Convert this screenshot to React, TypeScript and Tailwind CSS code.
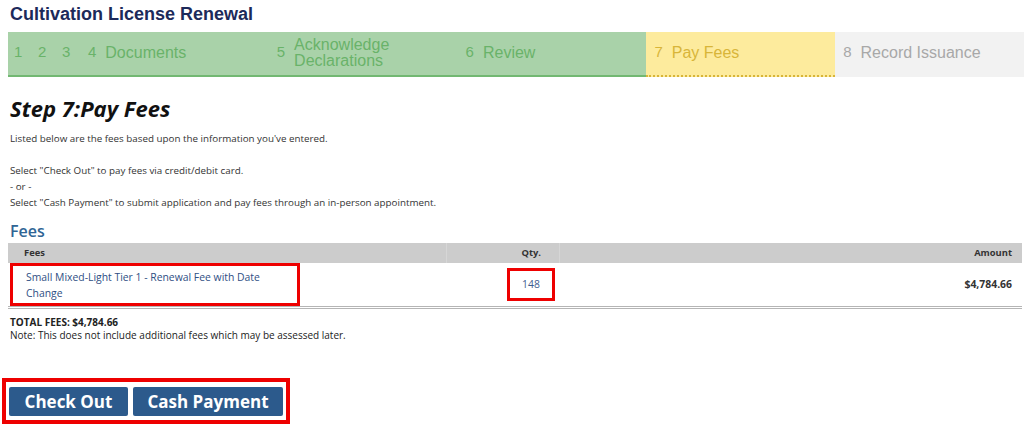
import React from 'react';

type Step = { num: string; label?: string[]; state: 'done' | 'current' | 'todo'; wide: boolean };

const STEPS: Step[] = [
  { num: '1', state: 'done', wide: false },
  { num: '2', state: 'done', wide: false },
  { num: '3', state: 'done', wide: false },
  { num: '4', label: ['Documents'], state: 'done', wide: true },
  { num: '5', label: ['Acknowledge', 'Declarations'], state: 'done', wide: true },
  { num: '6', label: ['Review'], state: 'done', wide: true },
  { num: '7', label: ['Pay Fees'], state: 'current', wide: true },
  { num: '8', label: ['Record Issuance'], state: 'todo', wide: true },
];

const STATE_CLASSES: Record<Step['state'], string> = {
  done: 'bg-[#a9d2a9] text-[#69b369] border-b-2 border-[#72b872]',
  current: 'bg-[#fdeb9d] text-[#d8b539] border-b-2 border-dotted border-[#d8b539]',
  todo: 'bg-[#f2f2f2] text-[#a8a8a8] border-b-2 border-[#f2f2f2]',
};

const StepBar: React.FC = () => (
  <div className="ml-[8px] mt-[7px] flex h-[45px]">
    {STEPS.map((s) => (
      <div
        key={s.num}
        className={`flex items-center h-full pb-[2px] ${s.wide ? 'w-[189px] pl-[8px]' : 'w-[24px] pl-[6px]'} ${STATE_CLASSES[s.state]}`}
      >
        <span className="text-[15px]">{s.num}</span>
        {s.label && (
          <span className="ml-[9px] text-[16px] leading-[16px]">
            {s.label.map((l) => (
              <span key={l} className="block">
                {l}
              </span>
            ))}
          </span>
        )}
      </div>
    ))}
  </div>
);

export default function App() {
  return (
    <div className="w-[1024px] h-[433px] bg-white overflow-hidden font-['Open_Sans',sans-serif]">
      <h1 className="pl-[10px] pt-[3px] text-[18px] leading-[22px] font-bold text-[#1c2a5a] font-['Liberation_Sans',Arial,sans-serif]">
        Cultivation License Renewal
      </h1>

      <div className="font-['Liberation_Sans',Arial,sans-serif]">
        <StepBar />
      </div>

      <div className="px-[10px]">
        <h2 className="mt-[17px] text-[22px] leading-[28px] font-bold italic text-[#111]">Step 7:Pay Fees</h2>

        <div className="mt-[9px] text-[9.8px] leading-[16px] text-[#333]">
          <p>Listed below are the fees based upon the information you've entered.</p>
          <p className="mt-[16px]">Select "Check Out" to pay fees via credit/debit card.</p>
          <p>- or -</p>
          <p>Select "Cash Payment" to submit application and pay fees through an in-person appointment.</p>
        </div>

        <h3 className="mt-[10px] text-[16px] leading-[20px] font-semibold text-[#2f6595]">Fees</h3>
      </div>

      <div className="ml-[8px] mr-[2px] mt-[2px]">
        <div className="flex h-[20px] items-center bg-[#cccccc] text-[9.4px] font-bold text-[#333]">
          <div className="w-[438px] pl-[16px]">Fees</div>
          <div className="w-[113px] h-full flex items-center justify-end pr-[18px] border-l border-[#d6d6d6]">Qty.</div>
          <div className="flex-1 h-full flex items-center justify-end pr-[10px] border-l border-[#d6d6d6]">Amount</div>
        </div>
        <div className="flex h-[46px] items-center border-b-[3px] border-double border-[#b5b5b5] text-[10.4px]">
          <div className="w-[438px] h-full">
            <div className="ml-[2px] w-[290px] h-full border-[3px] border-[#ee0000] pl-[13px] pr-[8px] pt-[3px] leading-[16px] text-[#2f4f84]">
              Small Mixed-Light Tier 1 - Renewal Fee with Date Change
            </div>
          </div>
          <div className="w-[113px] h-full flex items-center justify-end pr-[4px]">
            <div className="w-[48px] h-[33px] border-[3px] border-[#ee0000] flex items-center justify-center text-[#3d5d8f]">
              148
            </div>
          </div>
          <div className="flex-1 flex justify-end pr-[10px] font-bold text-[#333]">$4,784.66</div>
        </div>
      </div>

      <div className="px-[10px] mt-[7px] text-[10px] leading-[13px] text-[#222]">
        <p className="font-bold">TOTAL FEES: $4,784.66</p>
        <p>Note: This does not include additional fees which may be assessed later.</p>
      </div>

      <div className="ml-[2px] mt-[36px] inline-flex gap-[5px] border-[4px] border-[#ee0000] px-[3px] pt-[5px] pb-[4px]">
        <button className="w-[119px] h-[29px] bg-[#2c5a8c] rounded-[2px] text-white font-bold text-[17px] leading-none">
          Check Out
        </button>
        <button className="w-[150px] h-[29px] bg-[#2c5a8c] rounded-[2px] text-white font-bold text-[17px] leading-none">
          Cash Payment
        </button>
      </div>
    </div>
  );
}
